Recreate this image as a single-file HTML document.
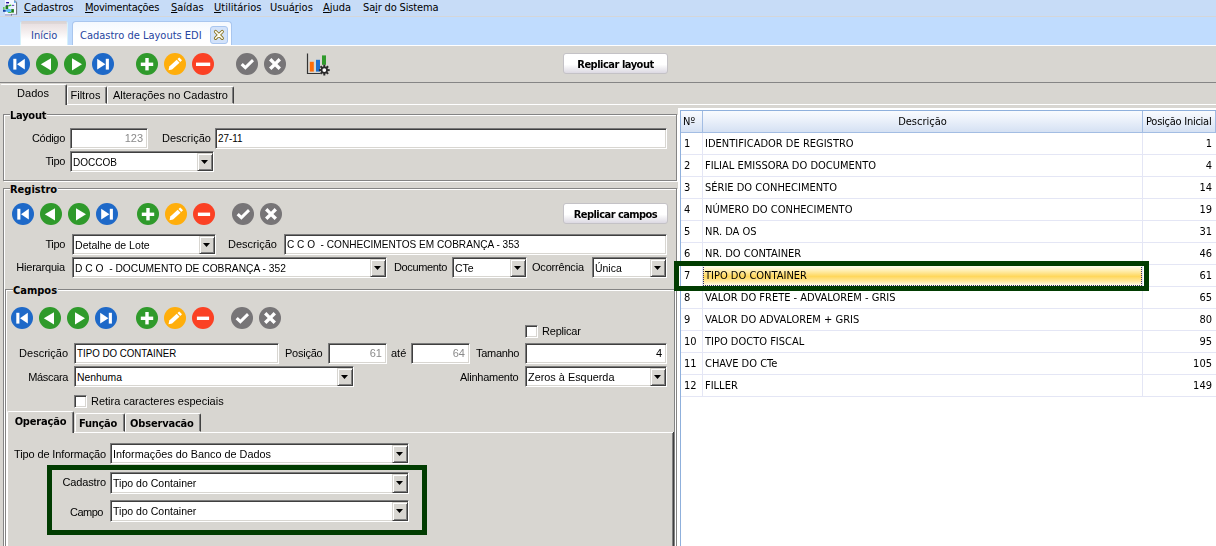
<!DOCTYPE html>
<html lang="pt-BR"><head><meta charset="utf-8"><title>Cadastro de Layouts EDI</title>
<style>
html,body{margin:0;padding:0;}
body{width:1216px;height:546px;overflow:hidden;background:#d8d6d1;position:relative;font-family:"Liberation Sans",sans-serif;font-size:11px;color:#000;}
.a{position:absolute;white-space:nowrap;}
.t{font-family:"DejaVu Sans Condensed","DejaVu Sans",sans-serif;font-size:11px;}
.tb{font-family:"DejaVu Sans Condensed","DejaVu Sans",sans-serif;font-size:11px;font-weight:bold;}
.l{position:absolute;white-space:nowrap;font-size:11px;line-height:14px;height:14px;}
.r{text-align:right;}
.inp{position:absolute;box-sizing:border-box;background:#fff;border:1px solid;border-color:#7b7b7b #fff #fff #7b7b7b;box-shadow:inset 1px 1px 0 #3f3f3f, inset -1px -1px 0 #d8d6d1;font-size:11px;line-height:14px;padding:2px 0 0 2px;white-space:nowrap;overflow:hidden;}
.inp.g{color:#8a8a8a;}
.sx{display:inline-block;transform-origin:0 0;}
.inp.r{padding-right:4px;}
.inp.p3{padding-top:3px;}
.dd{position:absolute;right:0;top:1px;bottom:0;width:16px;box-sizing:border-box;background:#d8d6d1;border:1px solid;border-color:#d8d6d1 #404040 #404040 #d8d6d1;box-shadow:inset 1px 1px 0 #fff, inset -1px -1px 0 #808080;}
.dd i{position:absolute;left:3px;top:6px;width:7px;height:4px;background:#000;clip-path:polygon(0 0,100% 0,50% 100%);}
.cb{position:absolute;box-sizing:border-box;width:13px;height:13px;background:#fff;border:1px solid;border-color:#7b7b7b #fff #fff #7b7b7b;box-shadow:inset 1px 1px 0 #3f3f3f, inset -1px -1px 0 #d8d6d1;}
.grp{position:absolute;box-sizing:border-box;border:1px solid #848484;box-shadow:inset 1px 1px 0 #fff, 1px 1px 0 #fff;}
.leg{position:absolute;background:#d8d6d1;font-family:"DejaVu Sans Condensed","DejaVu Sans",sans-serif;font-size:11px;font-weight:bold;line-height:13px;padding:0 1px 0 0;}
.btn{position:absolute;box-sizing:border-box;border:1px solid #c4c2c6;border-radius:3px;background:linear-gradient(#fff 0%,#fff 55%,#dcd9e2 100%);text-align:center;font-family:"DejaVu Sans Condensed","DejaVu Sans",sans-serif;font-size:11px;font-weight:bold;line-height:21px;}
.tab{position:absolute;box-sizing:border-box;border:1px solid;border-color:#fff #404040 transparent #fff;box-shadow:inset -1px 0 0 #808080;border-radius:2px 2px 0 0;text-align:center;white-space:nowrap;}
svg{position:absolute;display:block;}
#app{position:absolute;left:0;top:0;width:1216px;height:546px;overflow:hidden;opacity:0.999;}
</style></head>
<body>
<div id="app">
<div class="a" style="left:0;top:0;width:1216px;height:16px;background:#c7dcf7"></div>
<div class="a" style="left:0;top:16px;width:1216px;height:29px;background:#c0dcfe"></div>
<div class="a" style="left:0;top:16px;width:1216px;height:1px;background:#d5d6d8"></div>
<svg style="left:0;top:0" width="24" height="18" viewBox="0 0 24 18"><path d="M5 0 H14.2 L17 2.6 V14.4 H5 Z" fill="#f3f7ff"/><path d="M16.6 2.4 V14.6" stroke="#6b6b70" stroke-width="1"/><path d="M11 14.4 H17" stroke="#8a86b8" stroke-width="0.7"/><path d="M14 0.4 L16.6 2.7 H14 Z" fill="#4aa3ee"/><path d="M14.2 0 L17 2.6" stroke="#6b6b70" stroke-width="0.8"/><rect x="6.1" y="2" width="2.9" height="1.4" fill="#2b10a2"/><rect x="5.8" y="4.9" width="2.3" height="0.9" fill="#2b10a2"/><rect x="12" y="4.9" width="2.2" height="0.8" fill="#2b10a2"/><rect x="9.6" y="6.3" width="4.2" height="3" fill="#e6efff"/><path d="M8 5.2 L11 4.4 L11.6 5.8 L8.6 6.4 Z" fill="#36b42c"/><rect x="5.5" y="5.8" width="2.7" height="3.5" fill="#1f7a1a"/><rect x="11.2" y="9.1" width="2.7" height="3.5" fill="#1f7a1a"/><rect x="3.1" y="7" width="1.4" height="2.7" fill="#55c840"/><rect x="3" y="9.8" width="2.8" height="2" fill="#1642a8"/><ellipse cx="8.6" cy="10.6" rx="2.7" ry="1.9" fill="#5bbcf5"/><rect x="8.2" y="12" width="3" height="0.9" fill="#36b42c"/><rect x="5" y="14.3" width="6.2" height="1.2" fill="#a9a2cc"/><rect x="11" y="14.2" width="0.9" height="1.4" fill="#6a6a70"/></svg>
<div class="a t" style="left:24px;top:1px;line-height:14px"><u>C</u>adastros</div>
<div class="a t" style="left:85px;top:1px;line-height:14px"><span style="letter-spacing:-0.3px"><u>M</u>ovimentações</span></div>
<div class="a t" style="left:171px;top:1px;line-height:14px"><u>S</u>aídas</div>
<div class="a t" style="left:214px;top:1px;line-height:14px"><u>U</u>tilitários</div>
<div class="a t" style="left:270px;top:1px;line-height:14px">Usuá<u>r</u>ios</div>
<div class="a t" style="left:323px;top:1px;line-height:14px"><u>A</u>juda</div>
<div class="a t" style="left:363px;top:1px;line-height:14px"><span style="letter-spacing:-0.15px">Sa<u>i</u>r do Sistema</span></div>
<div class="a" style="left:20px;top:21px;width:48px;height:24px;box-sizing:border-box;border:1px solid #d6f1fa;border-top-color:#d9d3d3;border-bottom:0;border-radius:3px 3px 0 0;background:linear-gradient(#dcd5d5 0%,#dcd5d5 6%,#e9e1e2 10%,#f3eded 40%,#fff 75%)"></div>
<div class="a t" style="left:31px;top:29px;line-height:14px;color:#26459f">Início</div>
<div class="a" style="left:72px;top:21px;width:160px;height:24px;box-sizing:border-box;border:1px solid #a9c6ee;border-bottom:0;border-radius:4px 4px 0 0;background:linear-gradient(#f4f8fe 0%,#fff 60%)"></div>
<div class="a t" style="left:80px;top:29px;line-height:14px;color:#26459f">Cadastro de Layouts EDI</div>
<div class="a" style="left:210px;top:26px;width:18px;height:18px;box-sizing:border-box;border:1px solid #a9c6ef;border-radius:3px;background:#d2e2fa"></div>
<svg style="left:213px;top:29px" width="12" height="12" viewBox="0 0 12 12"><path d="M2.6 2.6 L9.2 9.2 M9.2 2.6 L2.6 9.2" stroke="#8a7522" stroke-width="3.4" stroke-linecap="round"/><path d="M2.6 2.6 L9.2 9.2 M9.2 2.6 L2.6 9.2" stroke="#fffef4" stroke-width="1.6" stroke-linecap="round"/></svg>
<div class="a" style="left:0;top:45px;width:1216px;height:1px;background:#fff"></div>
<svg style="left:8px;top:53px" width="22" height="22" viewBox="0 0 22 22"><circle cx="11" cy="11" r="11" fill="#1e69c8"/><rect x="5.3" y="5.8" width="3.1" height="10.8" fill="#fff"/><path d="M9 11.2 L16.8 5.8 V16.6 Z" fill="#fff"/></svg>
<svg style="left:36px;top:53px" width="22" height="22" viewBox="0 0 22 22"><circle cx="11" cy="11" r="11" fill="#2f9a2b"/><path d="M4.8 11.3 L15 5.2 V17.4 Z" fill="#fff"/></svg>
<svg style="left:64px;top:53px" width="22" height="22" viewBox="0 0 22 22"><circle cx="11" cy="11" r="11" fill="#2f9a2b"/><path d="M18 11.3 L8 5.2 V17.4 Z" fill="#fff"/></svg>
<svg style="left:92px;top:53px" width="22" height="22" viewBox="0 0 22 22"><circle cx="11" cy="11" r="11" fill="#1e69c8"/><rect x="13.8" y="5.8" width="3.1" height="10.8" fill="#fff"/><path d="M13.4 11.2 L5.2 5.8 V16.6 Z" fill="#fff"/></svg>
<svg style="left:136px;top:53px" width="22" height="22" viewBox="0 0 22 22"><circle cx="11" cy="11" r="11" fill="#2f9a2b"/><rect x="4.8" y="9.6" width="12.4" height="3.4" fill="#fff"/><rect x="9.3" y="5" width="3.4" height="12.4" fill="#fff"/></svg>
<svg style="left:164px;top:53px" width="22" height="22" viewBox="0 0 22 22"><circle cx="11" cy="11" r="11" fill="#ffae0b"/><path d="M4.5 17.2 L5.3 13.6 L12.7 6.7 L15.5 9.7 L8.1 16.5 Z" fill="#fff"/><path d="M13.5 6 L15.2 4.4 L18 7.3 L16.2 9 Z" fill="#fff"/></svg>
<svg style="left:192px;top:53px" width="22" height="22" viewBox="0 0 22 22"><circle cx="11" cy="11" r="11" fill="#fb4124"/><rect x="4" y="9.6" width="14.2" height="3.4" fill="#fff"/></svg>
<svg style="left:236px;top:53px" width="22" height="22" viewBox="0 0 22 22"><circle cx="11" cy="11" r="11" fill="#777577"/><path d="M4.6 12.2 L6.8 10 L9.4 12.6 L16 6 L18 8.2 L9.4 16.8 Z" fill="#fff"/></svg>
<svg style="left:264px;top:53px" width="22" height="22" viewBox="0 0 22 22"><circle cx="11" cy="11" r="11" fill="#777577"/><path d="M5 7.4 L7.4 5 L11 8.7 L14.6 5 L17 7.4 L13.4 11 L17 14.6 L14.6 17 L11 13.4 L7.4 17 L5 14.6 L8.7 11 Z" fill="#fff"/></svg>
<svg style="left:306px;top:52px" width="26" height="26" viewBox="0 0 26 26"><path d="M1.5 1.5 V21.5 H14" fill="none" stroke="#333" stroke-width="1.2"/><rect x="3.8" y="9.8" width="4" height="9.8" fill="#ff6d0a"/><rect x="10" y="7.8" width="4" height="11.8" fill="#1f6fd0"/><rect x="16" y="3.4" width="4" height="9.4" fill="#2f9a2b"/><g transform="translate(18.3 18.1)"><circle r="3.6" fill="#2b2b2b"/><g stroke="#2b2b2b" stroke-width="2"><path d="M0 -5.4 V5.4"/><path d="M-5.4 0 H5.4"/><path d="M-3.8 -3.8 L3.8 3.8"/><path d="M3.8 -3.8 L-3.8 3.8"/></g><circle r="1.9" fill="#fff"/></g></svg>
<div class="btn" style="left:563px;top:53px;width:105px;height:21px;letter-spacing:-0.49px">Replicar layout</div>
<div class="a" style="left:0;top:82px;width:1216px;height:1px;background:#858585"></div>
<div class="a" style="left:0;top:104px;width:1216px;height:1px;background:#fff"></div>
<div class="tab" style="left:0px;top:84px;width:67px;height:21px;background:#d8d6d1;line-height:17px;border-bottom:0;border-left-color:transparent;padding-right:1px">Dados</div>
<div class="tab" style="left:67px;top:86px;width:40px;height:18px;line-height:17px;padding-right:3px">Filtros</div>
<div class="tab" style="left:107px;top:86px;width:127px;height:18px;line-height:17px">Alterações no Cadastro</div>
<div class="grp" style="left:3px;top:114px;width:674px;height:67px"></div>
<div class="leg" style="left:10px;top:109px;letter-spacing:-0.25px">Layout</div>
<div class="l r " style="right:1151px;top:131px;letter-spacing:-0.3px">Código</div>
<div class="inp g r" style="left:70px;top:128px;width:78px;height:21px">123</div>
<div class="l " style="left:162px;top:131px">Descrição</div>
<div class="inp " style="left:215px;top:128px;width:452px;height:21px"><span class="sx" style="transform:scaleX(0.9)">27-11</span></div>
<div class="l r " style="right:1151px;top:154px;letter-spacing:-0.35px">Tipo</div>
<div class="inp  p3" style="left:70px;top:151px;width:144px;height:21px"><span class="sx" style="transform:scaleX(0.911)">DOCCOB</span><span class="dd"><i></i></span></div>
<div class="grp" style="left:3px;top:188px;width:674px;height:400px"></div>
<div class="leg" style="left:10px;top:183px">Registro</div>
<svg style="left:12px;top:203px" width="22" height="22" viewBox="0 0 22 22"><circle cx="11" cy="11" r="11" fill="#1e69c8"/><rect x="5.3" y="5.8" width="3.1" height="10.8" fill="#fff"/><path d="M9 11.2 L16.8 5.8 V16.6 Z" fill="#fff"/></svg>
<svg style="left:40px;top:203px" width="22" height="22" viewBox="0 0 22 22"><circle cx="11" cy="11" r="11" fill="#2f9a2b"/><path d="M4.8 11.3 L15 5.2 V17.4 Z" fill="#fff"/></svg>
<svg style="left:68px;top:203px" width="22" height="22" viewBox="0 0 22 22"><circle cx="11" cy="11" r="11" fill="#2f9a2b"/><path d="M18 11.3 L8 5.2 V17.4 Z" fill="#fff"/></svg>
<svg style="left:96px;top:203px" width="22" height="22" viewBox="0 0 22 22"><circle cx="11" cy="11" r="11" fill="#1e69c8"/><rect x="13.8" y="5.8" width="3.1" height="10.8" fill="#fff"/><path d="M13.4 11.2 L5.2 5.8 V16.6 Z" fill="#fff"/></svg>
<svg style="left:137px;top:203px" width="22" height="22" viewBox="0 0 22 22"><circle cx="11" cy="11" r="11" fill="#2f9a2b"/><rect x="4.8" y="9.6" width="12.4" height="3.4" fill="#fff"/><rect x="9.3" y="5" width="3.4" height="12.4" fill="#fff"/></svg>
<svg style="left:165px;top:203px" width="22" height="22" viewBox="0 0 22 22"><circle cx="11" cy="11" r="11" fill="#ffae0b"/><path d="M4.5 17.2 L5.3 13.6 L12.7 6.7 L15.5 9.7 L8.1 16.5 Z" fill="#fff"/><path d="M13.5 6 L15.2 4.4 L18 7.3 L16.2 9 Z" fill="#fff"/></svg>
<svg style="left:193px;top:203px" width="22" height="22" viewBox="0 0 22 22"><circle cx="11" cy="11" r="11" fill="#fb4124"/><rect x="4.9" y="9.6" width="12.2" height="3.4" fill="#fff"/></svg>
<svg style="left:232px;top:203px" width="22" height="22" viewBox="0 0 22 22"><circle cx="11" cy="11" r="11" fill="#777577"/><path d="M4.6 12.2 L6.8 10 L9.4 12.6 L16 6 L18 8.2 L9.4 16.8 Z" fill="#fff"/></svg>
<svg style="left:260px;top:203px" width="22" height="22" viewBox="0 0 22 22"><circle cx="11" cy="11" r="11" fill="#777577"/><path d="M5 7.4 L7.4 5 L11 8.7 L14.6 5 L17 7.4 L13.4 11 L17 14.6 L14.6 17 L11 13.4 L7.4 17 L5 14.6 L8.7 11 Z" fill="#fff"/></svg>
<div class="btn" style="left:563px;top:203px;width:105px;height:21px;letter-spacing:-0.55px">Replicar campos</div>
<div class="l r " style="right:1151px;top:237px;letter-spacing:-0.35px">Tipo</div>
<div class="inp  p3" style="left:72px;top:234px;width:144px;height:21px"><span class="sx" style="transform:scaleX(0.962)">Detalhe de Lote</span><span class="dd"><i></i></span></div>
<div class="l " style="left:228px;top:237px">Descrição</div>
<div class="inp " style="left:284px;top:234px;width:383px;height:21px"><span class="sx" style="transform:scaleX(0.917)">C C O &nbsp;- CONHECIMENTOS EM COBRANÇA - 353</span></div>
<div class="l r " style="right:1151px;top:260px;letter-spacing:-0.2px">Hierarquia</div>
<div class="inp  p3" style="left:72px;top:257px;width:315px;height:21px"><span class="sx" style="transform:scaleX(0.931)">D C O &nbsp;- DOCUMENTO DE COBRANÇA - 352</span><span class="dd"><i></i></span></div>
<div class="l " style="left:394px;top:260px;letter-spacing:-0.36px">Documento</div>
<div class="inp  p3" style="left:452px;top:257px;width:75px;height:21px"><span class="sx" style="transform:scaleX(0.956)">CTe</span><span class="dd"><i></i></span></div>
<div class="l " style="left:532px;top:260px;letter-spacing:-0.2px">Ocorrência</div>
<div class="inp  p3" style="left:592px;top:257px;width:75px;height:21px"><span class="sx" style="transform:scaleX(0.95)">Única</span><span class="dd"><i></i></span></div>
<div class="grp" style="left:5px;top:289px;width:670px;height:300px"></div>
<div class="leg" style="left:13px;top:284px">Campos</div>
<svg style="left:11px;top:307px" width="22" height="22" viewBox="0 0 22 22"><circle cx="11" cy="11" r="11" fill="#1e69c8"/><rect x="5.3" y="5.8" width="3.1" height="10.8" fill="#fff"/><path d="M9 11.2 L16.8 5.8 V16.6 Z" fill="#fff"/></svg>
<svg style="left:39px;top:307px" width="22" height="22" viewBox="0 0 22 22"><circle cx="11" cy="11" r="11" fill="#2f9a2b"/><path d="M4.8 11.3 L15 5.2 V17.4 Z" fill="#fff"/></svg>
<svg style="left:67px;top:307px" width="22" height="22" viewBox="0 0 22 22"><circle cx="11" cy="11" r="11" fill="#2f9a2b"/><path d="M18 11.3 L8 5.2 V17.4 Z" fill="#fff"/></svg>
<svg style="left:95px;top:307px" width="22" height="22" viewBox="0 0 22 22"><circle cx="11" cy="11" r="11" fill="#1e69c8"/><rect x="13.8" y="5.8" width="3.1" height="10.8" fill="#fff"/><path d="M13.4 11.2 L5.2 5.8 V16.6 Z" fill="#fff"/></svg>
<svg style="left:136px;top:307px" width="22" height="22" viewBox="0 0 22 22"><circle cx="11" cy="11" r="11" fill="#2f9a2b"/><rect x="4.8" y="9.6" width="12.4" height="3.4" fill="#fff"/><rect x="9.3" y="5" width="3.4" height="12.4" fill="#fff"/></svg>
<svg style="left:164px;top:307px" width="22" height="22" viewBox="0 0 22 22"><circle cx="11" cy="11" r="11" fill="#ffae0b"/><path d="M4.5 17.2 L5.3 13.6 L12.7 6.7 L15.5 9.7 L8.1 16.5 Z" fill="#fff"/><path d="M13.5 6 L15.2 4.4 L18 7.3 L16.2 9 Z" fill="#fff"/></svg>
<svg style="left:192px;top:307px" width="22" height="22" viewBox="0 0 22 22"><circle cx="11" cy="11" r="11" fill="#fb4124"/><rect x="4.9" y="9.6" width="12.2" height="3.4" fill="#fff"/></svg>
<svg style="left:231px;top:307px" width="22" height="22" viewBox="0 0 22 22"><circle cx="11" cy="11" r="11" fill="#777577"/><path d="M4.6 12.2 L6.8 10 L9.4 12.6 L16 6 L18 8.2 L9.4 16.8 Z" fill="#fff"/></svg>
<svg style="left:259px;top:307px" width="22" height="22" viewBox="0 0 22 22"><circle cx="11" cy="11" r="11" fill="#777577"/><path d="M5 7.4 L7.4 5 L11 8.7 L14.6 5 L17 7.4 L13.4 11 L17 14.6 L14.6 17 L11 13.4 L7.4 17 L5 14.6 L8.7 11 Z" fill="#fff"/></svg>
<div class="cb" style="left:525px;top:325px"></div>
<div class="l " style="left:542px;top:324px;letter-spacing:-0.2px">Replicar</div>
<div class="l r " style="right:1148px;top:346px">Descrição</div>
<div class="inp " style="left:74px;top:343px;width:205px;height:21px"><span class="sx" style="transform:scaleX(0.884)">TIPO DO CONTAINER</span></div>
<div class="l " style="left:285px;top:346px;letter-spacing:-0.25px">Posição</div>
<div class="inp g r" style="left:328px;top:343px;width:59px;height:21px">61</div>
<div class="l " style="left:391px;top:346px">até</div>
<div class="inp g r" style="left:411px;top:343px;width:59px;height:21px">64</div>
<div class="l " style="left:476px;top:346px;letter-spacing:-0.3px">Tamanho</div>
<div class="inp r" style="left:525px;top:343px;width:142px;height:21px">4</div>
<div class="l r " style="right:1148px;top:370px;letter-spacing:-0.35px">Máscara</div>
<div class="inp  p3" style="left:74px;top:366px;width:280px;height:21px"><span class="sx" style="transform:scaleX(0.943)">Nenhuma</span><span class="dd"><i></i></span></div>
<div class="l " style="left:460px;top:370px;letter-spacing:-0.26px">Alinhamento</div>
<div class="inp  p3" style="left:525px;top:366px;width:142px;height:21px"><span class="sx" style="transform:scaleX(0.989)">Zeros à Esquerda</span><span class="dd"><i></i></span></div>
<div class="cb" style="left:74px;top:395px"></div>
<div class="l " style="left:91px;top:394px">Retira caracteres especiais</div>
<div class="a" style="left:7px;top:432px;width:667px;height:1px;background:#fff"></div>
<div class="a" style="left:673px;top:432px;width:1px;height:114px;background:#404040"></div>
<div class="a" style="left:672px;top:433px;width:1px;height:113px;background:#808080"></div>
<div class="a" style="left:7px;top:432px;width:1px;height:114px;background:#fff"></div>
<div class="tab tb" style="left:7px;top:411px;width:67px;height:22px;background:#d8d6d1;line-height:20px;border-bottom:0;letter-spacing:-0.17px">Operação</div>
<div class="tab tb" style="left:75px;top:413px;width:50px;height:19px;line-height:19px;letter-spacing:-0.27px;text-align:left;padding-left:3px">Função</div>
<div class="tab tb" style="left:125px;top:413px;width:76px;height:19px;line-height:19px;letter-spacing:-0.17px;text-align:left;padding-left:4px">Observacão</div>
<div class="l " style="left:14px;top:447px;letter-spacing:-0.13px">Tipo de Informação</div>
<div class="inp p3" style="left:110px;top:443px;width:299px;height:21px"><span class="sx" style="transform:scaleX(0.9855)">Informações do Banco de Dados</span><span class="dd"><i></i></span></div>
<div class="a" style="left:47px;top:465px;width:380px;height:70px;box-sizing:border-box;border:5px solid #003c00"></div>
<div class="l r " style="right:1110px;top:475px;letter-spacing:-0.15px">Cadastro</div>
<div class="inp p3" style="left:110px;top:472px;width:299px;height:22px"><span class="sx" style="transform:scaleX(0.958)">Tipo do Container</span><span class="dd"><i></i></span></div>
<div class="l r " style="right:1113px;top:505px;letter-spacing:-0.5px">Campo</div>
<div class="inp p3" style="left:110px;top:500px;width:299px;height:22px"><span class="sx" style="transform:scaleX(0.958)">Tipo do Container</span><span class="dd"><i></i></span></div>
<div class="a" style="left:678px;top:108px;width:538px;height:438px;background:#fff"></div>
<div class="a" style="left:680px;top:110px;width:536px;height:436px;border-left:1px solid #8fb0dc;border-top:1px solid #8fb0dc;box-sizing:border-box"></div>
<div class="a t" style="left:681px;top:111px;width:22px;height:22px;box-sizing:border-box;background:linear-gradient(#f9fbfe 0%,#eaf0fa 45%,#d5e1f3 100%);border-right:1px solid #a3bde3;border-bottom:1px solid #a3bde3;text-align:left;line-height:21px;padding-left:2px">Nº</div>
<div class="a t" style="left:703px;top:111px;width:440px;height:22px;box-sizing:border-box;background:linear-gradient(#f9fbfe 0%,#eaf0fa 45%,#d5e1f3 100%);border-right:1px solid #a3bde3;border-bottom:1px solid #a3bde3;text-align:center;line-height:21px;">Descrição</div>
<div class="a t" style="left:1143px;top:111px;width:73px;height:22px;box-sizing:border-box;background:linear-gradient(#f9fbfe 0%,#eaf0fa 45%,#d5e1f3 100%);border-right:1px solid #a3bde3;border-bottom:1px solid #a3bde3;text-align:left;line-height:21px;padding-left:3px;letter-spacing:-0.25px">Posição Inicial</div>
<div class="a" style="left:681px;top:154px;width:535px;height:1px;background:#e4e6f5"></div>
<div class="a t" style="left:684px;top:133px;line-height:21px">1</div>
<div class="a t" style="left:705px;top:133px;line-height:21px">IDENTIFICADOR DE REGISTRO</div>
<div class="a t" style="right:4px;top:133px;line-height:21px">1</div>
<div class="a" style="left:681px;top:176px;width:535px;height:1px;background:#e4e6f5"></div>
<div class="a t" style="left:684px;top:155px;line-height:21px">2</div>
<div class="a t" style="left:705px;top:155px;line-height:21px">FILIAL EMISSORA DO DOCUMENTO</div>
<div class="a t" style="right:4px;top:155px;line-height:21px">4</div>
<div class="a" style="left:681px;top:198px;width:535px;height:1px;background:#e4e6f5"></div>
<div class="a t" style="left:684px;top:177px;line-height:21px">3</div>
<div class="a t" style="left:705px;top:177px;line-height:21px">SÉRIE DO CONHECIMENTO</div>
<div class="a t" style="right:4px;top:177px;line-height:21px">14</div>
<div class="a" style="left:681px;top:220px;width:535px;height:1px;background:#e4e6f5"></div>
<div class="a t" style="left:684px;top:199px;line-height:21px">4</div>
<div class="a t" style="left:705px;top:199px;line-height:21px">NÚMERO DO CONHECIMENTO</div>
<div class="a t" style="right:4px;top:199px;line-height:21px">19</div>
<div class="a" style="left:681px;top:242px;width:535px;height:1px;background:#e4e6f5"></div>
<div class="a t" style="left:684px;top:221px;line-height:21px">5</div>
<div class="a t" style="left:705px;top:221px;line-height:21px">NR. DA OS</div>
<div class="a t" style="right:4px;top:221px;line-height:21px">31</div>
<div class="a" style="left:681px;top:264px;width:535px;height:1px;background:#e4e6f5"></div>
<div class="a t" style="left:684px;top:243px;line-height:21px">6</div>
<div class="a t" style="left:705px;top:243px;line-height:21px">NR. DO CONTAINER</div>
<div class="a t" style="right:4px;top:243px;line-height:21px">46</div>
<div class="a" style="left:681px;top:286px;width:535px;height:1px;background:#e4e6f5"></div>
<div class="a" style="left:703px;top:265px;width:439px;height:21px;box-sizing:border-box;background:linear-gradient(#fffdf0 0%,#ffeeb0 25%,#ffd75c 55%,#ffe89c 80%,#fffbe6 100%);border:1px dotted #33306a"></div>
<div class="a t" style="left:684px;top:265px;line-height:21px">7</div>
<div class="a t" style="left:705px;top:265px;line-height:21px">TIPO DO CONTAINER</div>
<div class="a t" style="right:4px;top:265px;line-height:21px">61</div>
<div class="a" style="left:681px;top:308px;width:535px;height:1px;background:#e4e6f5"></div>
<div class="a t" style="left:684px;top:287px;line-height:21px">8</div>
<div class="a t" style="left:705px;top:287px;line-height:21px">VALOR DO FRETE - ADVALOREM - GRIS</div>
<div class="a t" style="right:4px;top:287px;line-height:21px">65</div>
<div class="a" style="left:681px;top:330px;width:535px;height:1px;background:#e4e6f5"></div>
<div class="a t" style="left:684px;top:309px;line-height:21px">9</div>
<div class="a t" style="left:705px;top:309px;line-height:21px">VALOR DO ADVALOREM + GRIS</div>
<div class="a t" style="right:4px;top:309px;line-height:21px">80</div>
<div class="a" style="left:681px;top:352px;width:535px;height:1px;background:#e4e6f5"></div>
<div class="a t" style="left:684px;top:331px;line-height:21px">10</div>
<div class="a t" style="left:705px;top:331px;line-height:21px">TIPO DOCTO FISCAL</div>
<div class="a t" style="right:4px;top:331px;line-height:21px">95</div>
<div class="a" style="left:681px;top:374px;width:535px;height:1px;background:#e4e6f5"></div>
<div class="a t" style="left:684px;top:353px;line-height:21px">11</div>
<div class="a t" style="left:705px;top:353px;line-height:21px">CHAVE DO CTe</div>
<div class="a t" style="right:4px;top:353px;line-height:21px">105</div>
<div class="a" style="left:681px;top:396px;width:535px;height:1px;background:#e4e6f5"></div>
<div class="a t" style="left:684px;top:375px;line-height:21px">12</div>
<div class="a t" style="left:705px;top:375px;line-height:21px">FILLER</div>
<div class="a t" style="right:4px;top:375px;line-height:21px">149</div>
<div class="a" style="left:702px;top:133px;width:1px;height:264px;background:#e4e6f5"></div>
<div class="a" style="left:1142px;top:133px;width:1px;height:264px;background:#e4e6f5"></div>
<div class="a" style="left:674px;top:261px;width:475px;height:30px;box-sizing:border-box;border:5px solid #003c00"></div>
</div>
</body></html>
